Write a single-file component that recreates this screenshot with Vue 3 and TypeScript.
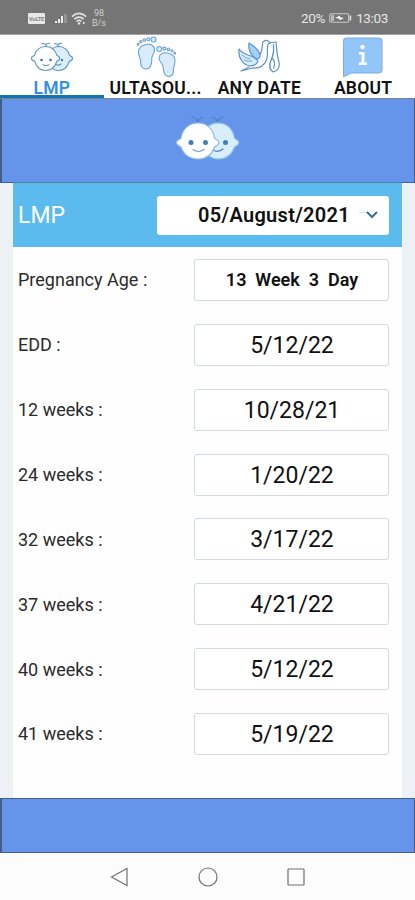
<script setup lang="ts">
import { ref } from 'vue'

interface Result {
  label: string
  value: string
  strong?: boolean
}

const tabs = ['LMP', 'ULTASOU...', 'ANY DATE', 'ABOUT']
const active = ref(0)

const results: Result[] = [
  { label: 'Pregnancy Age :', value: '13  Week  3  Day', strong: true },
  { label: 'EDD :', value: '5/12/22' },
  { label: '12 weeks :', value: '10/28/21' },
  { label: '24 weeks :', value: '1/20/22' },
  { label: '32 weeks :', value: '3/17/22' },
  { label: '37 weeks :', value: '4/21/22' },
  { label: '40 weeks :', value: '5/12/22' },
  { label: '41 weeks :', value: '5/19/22' },
]
</script>

<template>
  <div class="screen">
    <div class="status">
      <div class="status-left">
        <span class="volte">VoLTE</span>
        <svg class="signal" width="14" height="12" viewBox="0 0 14 12">
          <path d="M0 9h2v2H0zM3 7h2v4H3zM6 4h2v7H6z" fill="#ececec" />
          <path d="M9 2h3v9H9z" fill="#939393" />
        </svg>
        <svg class="wifi" width="16" height="13" viewBox="0 0 16 13">
          <path d="M1 4.600Q8-1.800 15 4.600M3.300 7.200Q8 3 12.700 7.200M5.600 9.500Q8 7.400 10.400 9.500" fill="none" stroke="#e2e2e2" stroke-width="1.600" />
          <circle cx="8" cy="11.400" r="1.200" fill="#e6e6e6" />
          <path d="M12 10h1.500v2H12z" fill="#e6e6e6" />
        </svg>
        <span class="speed"><span>98</span><span>B/s</span></span>
      </div>
      <div class="status-right">
        <span>20%</span>
        <svg width="23" height="10" viewBox="0 0 23 10">
          <rect x=".7" y=".7" width="19" height="8.600" rx="1.500" fill="none" stroke="#c9c9c9" stroke-width="1.100" />
          <path d="M2 2h3v6H2z" fill="#bbb" />
          <path d="M6 5l5-2.500v1.700L15 5l-4.500 2.200V5.800z" fill="#fff" />
          <path d="M21.400 2.500v5" stroke="#ddd" stroke-width="1.600" />
        </svg>
        <span>13:03</span>
      </div>
    </div>

    <nav class="tabs">
      <button v-for="(tab, i) in tabs" :key="tab" class="tab" :class="{ active: i === active }" @click="active = i">
        <svg v-if="i === 0" class="tab-icon" width="44" height="42" viewBox="0 0 44 42">
          <g stroke="#5f93c6" stroke-width="1.100" stroke-linecap="round" fill="#dceffc">
            <path d="M28.500 11.500C34.500 11.500 38.500 15.500 39.500 20.500c4 1 4 5 0 5.500C37.500 32 34 35.500 28.500 35.500s-10-5-10-12 4-12 10-12z" />
            <path d="M28 11.500c-.5-2 1-3.500 4-3.300M28 11c0-1.800-1.500-2.500-3.500-2.300" fill="none" />
            <circle cx="32" cy="25" r="1.200" fill="#2879bb" stroke="none" />
            <path d="M26 29.500q3 1.500 5-.5" fill="none" />
            <path d="M15.500 11.500C21.500 11.500 25.500 15.500 27 20.500c3.500 1 3.500 5 0 5.500C25 32 21.500 35.500 15.500 35.500S6.500 32 4.500 26c-4-.5-4-4.500 0-5.500 1-5 5-9 11-9z" fill="#fff" />
            <path d="M16 11.500c-.5-2 1-3.500 3.500-3.300M16 11c0-1.800-1.500-2.500-4-2.300" fill="none" />
            <circle cx="11.500" cy="25" r="1.300" fill="#2879bb" stroke="none" />
            <circle cx="20.500" cy="25" r="1.300" fill="#2879bb" stroke="none" />
            <path d="M13 29.800q3 1.500 6 0" fill="none" />
          </g>
        </svg>
        <svg v-else-if="i === 1" class="tab-icon feet" width="44" height="42" viewBox="0 0 44 42">
          <g fill="#d9ecfd" stroke="#6ba2d5" stroke-width="1.100">
            <path d="M9 11c5-3 12-2.500 12.500 3.500.3 3.500-2.700 5.500-2.700 9C19 29 17.500 34 13.300 34S7.500 30 7.500 26c0-3-2-5-2-8.500S7 12.200 9 11z" />
            <path d="M38.500 19.500c-5-3-12-2-12.500 3.500-.3 3.500 3.500 5 4 8.500.5 6 1.500 10 5.500 10S40.500 38 40.500 35c0-4 1.500-5.500 1.500-9s-1.500-5.500-3.500-6.500z" />
            <circle cx="20.500" cy="4.500" r="2.500" />
            <circle cx="15.300" cy="4.300" r="1.500" />
            <circle cx="11.300" cy="5" r="1.300" />
            <circle cx="7.800" cy="6.700" r="1.100" />
            <circle cx="5.200" cy="9.300" r=".9" />
            <circle cx="26.300" cy="14" r="2.500" />
            <circle cx="31.400" cy="13.600" r="1.500" />
            <circle cx="35.500" cy="14.300" r="1.300" />
            <circle cx="39" cy="15.800" r="1.100" />
            <circle cx="41.700" cy="18.200" r=".9" />
          </g>
        </svg>
        <svg v-else-if="i === 2" class="tab-icon" width="44" height="42" viewBox="0 0 44 42">
          <g stroke="#5c93cf" stroke-width="1.200" stroke-linejoin="round" stroke-linecap="round">
            <path d="M31 8l8-1c1 7 .5 13 3 20 1.500 5-1.500 9-5.500 10-4-2-5-7-1.500-14 1.500-4 2-9 1.500-13.500" fill="#fff" />
            <path d="M35 23c3 3 3 7 1.500 10" fill="none" />
            <path d="M25.500 9c0-3.500 4-4.500 6-2.500l2 1.500-2.500 1c-1.500 6 .5 11-1.500 16-2.500 6-8 8.500-14 8L4 36c4-1.500 7-3 9-5z" fill="#fff" stroke="none" />
            <path d="M21 22c4-3 4-8 4.500-13 0-3.500 4-4.500 6-2.500l2 1.500-2.500 1c-1.500 6 .5 11-1.500 16-2.500 6-8 8.500-14 8L4 36l8-4" fill="none" />
            <path d="M2 14c-1 9 4 16 11 17 4 0 7-2 8-5-3-4-7-5-10-6-4-1.500-7-3-9-6z" fill="#d7ebfe" />
            <path d="M12 8c-1 7 2 12 6 15 2 1.500 5 1 5-2 0-6-6-10-11-13z" fill="#a6d0fa" />
            <path d="M5 20q4 4 8 4M7 25q4 2 8 1" fill="none" stroke-width=".8" />
          </g>
        </svg>
        <svg v-else class="tab-icon" width="44" height="42" viewBox="0 0 44 42">
          <path d="M5 3h33q3 0 3 3v29q0 3-3 3H10l-7.500 4V6Q2.500 3 5 3z" fill="#92c6f9" stroke="#79acdf" stroke-width="1" />
          <circle cx="21.500" cy="12" r="2.200" fill="#fff" />
          <path d="M18 17h5.500v10.500H26V30h-8v-2.500h2.500v-8H18z" fill="#fff" />
        </svg>
        <span class="tab-label">{{ tab }}</span>
      </button>
    </nav>

    <header class="banner">
      <svg width="66" height="48" viewBox="0 0 66 48">
        <g stroke-linecap="round" fill="none" stroke="#4f80c5" stroke-width="1.200">
          <path d="M43 8c-1-3-3-4-6-5M43 8c0-2 2-4 5-5M23 8c-1-3-3-4-6-5M23 8c0-2 2-4 5-5" />
          <path d="M43 9C52 9 58 15 59.500 24c1 2 4.500 2 4.500 4.500S61 32 59.500 33C57 40.500 51 45 43 45S27 38 27 27 34 9 43 9z" fill="#d8eefc" stroke="#8abdea" />
          <circle cx="50.500" cy="28.500" r="2.500" fill="#427fb8" stroke="none" />
          <path d="M38 36q5 3 10-1" />
          <path d="M23 9C32 9 38 15 39.500 24c1 2 4.500 2 4.500 4.500S41 32 39.500 33C37 40.500 31 45 23 45S8.500 40.500 6 33C4.500 32 1.500 31 1.500 28.500S5 26 6 24C7.500 15 14 9 23 9z" fill="#fff" stroke="#91bbe6" />
          <circle cx="16" cy="28.500" r="2.500" fill="#427fb8" stroke="none" />
          <circle cx="30.500" cy="28.500" r="2.500" fill="#427fb8" stroke="none" />
          <path d="M18 35.500q5.500 4 11 0" stroke="#6e9bca" />
        </g>
      </svg>
    </header>

    <main class="card">
      <section class="picker">
        <span class="picker-label">LMP</span>
        <button class="date">
          <span class="date-text">05/August/2021</span>
          <svg width="20" height="12" viewBox="0 0 20 12">
            <path d="M0 3h8l2 1H0z" fill="#dce5ea" />
            <path d="M8 3l5 5 5-5" fill="none" stroke="#38708d" stroke-width="2" />
          </svg>
        </button>
      </section>
      <section class="results">
        <div v-for="row in results" :key="row.label" class="row">
          <span class="label">{{ row.label }}</span>
          <span class="value" :class="{ strong: row.strong }">{{ row.value }}</span>
        </div>
      </section>
    </main>

    <div class="footer"></div>
    <div class="system">
      <svg width="20" height="20" viewBox="0 0 20 20"><path d="M1.500 10L17 1.500v17z" /></svg>
      <svg width="20" height="20" viewBox="0 0 20 20"><circle cx="10" cy="10" r="9" /></svg>
      <svg width="20" height="20" viewBox="0 0 20 20"><rect x="2" y="2" width="16" height="16" rx=".5" /></svg>
    </div>
  </div>
</template>

<style>
body {
  margin: 0;
  overflow: hidden;
}
</style>

<style scoped>
.screen {
  width: 415px;
  height: 900px;
  display: flex;
  flex-direction: column;
  overflow: hidden;
  background: #ebf1f5;
  font-family: Roboto, 'Liberation Sans', sans-serif;
  color: #111;
}
.screen * {
  box-sizing: border-box;
}
button {
  font-family: inherit;
  border: 0;
  padding: 0;
}
.status {
  flex: 0 0 35px;
  display: flex;
  justify-content: space-between;
  padding: 0 27px 0 28px;
  background: #757575;
  border-bottom: 1px solid #a5a5a5;
  color: #e6e6e6;
}
.status-left,
.status-right {
  display: flex;
  align-items: center;
  padding-top: 2px;
}
.volte {
  width: 17px;
  height: 11px;
  border-radius: 1px;
  background: #e8e8e8;
  color: #858585;
  font-size: 6px;
  line-height: 11px;
  font-weight: 700;
  text-align: center;
  letter-spacing: -0.3px;
}
.signal {
  margin-left: 10px;
}
.wifi {
  margin-left: 2px;
}
.speed {
  display: flex;
  flex-direction: column;
  margin-left: 5px;
  align-items: center;
  font-size: 9px;
  line-height: 10px;
  color: #d0d0d0;
}
.status-right {
  font-size: 13.5px;
  letter-spacing: -0.35px;
  gap: 4px;
  padding-top: 1px;
}
.tabs {
  flex: 0 0 63px;
  display: grid;
  grid-template-columns: repeat(4, 1fr);
  background: #fff;
  border-bottom: 1px solid #78828f;
}
.tab {
  display: flex;
  flex-direction: column;
  align-items: center;
  height: 63px;
  background: none;
  border-bottom: 3px solid transparent;
  color: #111;
}
.tab.active {
  color: #318fe5;
  border-bottom-color: #1673b1;
}
.tab-icon {
  flex: 0 0 42px;
}
.feet {
  margin-right: 2px;
}
.tab-label {
  margin-top: 1px;
  font-size: 17.5px;
  line-height: 20px;
  font-weight: 600;
  letter-spacing: 0.25px;
  white-space: nowrap;
}
.banner {
  flex: 0 0 84px;
  display: flex;
  align-items: flex-start;
  justify-content: center;
  padding-top: 15px;
  background: #6495ea;
  border: 1px solid #425e86;
  border-left-width: 2px;
  border-top: 0;
}
.card {
  flex: 0 0 616px;
  margin: -1px 13px 0;
  background: #fefefe;
}
.picker {
  height: 65px;
  display: flex;
  justify-content: space-between;
  align-items: center;
  padding: 0 13px 0 5px;
  background: #5bbaee;
  border-top: 1px solid #4f7fa8;
}
.picker-label {
  font-size: 23px;
  color: #fff;
}
.date {
  width: 232px;
  height: 39px;
  display: flex;
  align-items: center;
  justify-content: flex-end;
  gap: 9px;
  padding-right: 10px;
  border-radius: 3px;
  background: #fff;
  color: #111;
}
.date-text {
  font-size: 20px;
  font-weight: 600;
  letter-spacing: 0.3px;
}
.results {
  display: flex;
  flex-direction: column;
  gap: 22.85px;
  padding: 12px 13px 0 5px;
}
.row {
  display: grid;
  grid-template-columns: 1fr 195px;
  height: 42px;
  align-items: center;
}
.label {
  font-size: 18px;
  line-height: 20px;
  padding-top: 1px;
  color: #2b2b2b;
}
.row:first-child .label {
  padding: 0 0 1px;
}
.value {
  height: 42px;
  padding-left: 1px;
  border: 1px solid #d2dadf;
  border-radius: 3px;
  background: #fff;
  font-size: 23px;
  line-height: 41px;
  text-align: center;
  white-space: pre;
}
.value.strong {
  font-size: 18px;
  line-height: 40px;
  font-weight: 600;
}
.footer {
  flex: 0 0 55px;
  background: #6495ea;
  border: 1px solid #425e86;
  border-left-width: 2px;
}
.system {
  flex: 1;
  display: flex;
  justify-content: center;
  gap: 68px;
  padding-top: 14px;
  background: #fcfcfc;
}
.system svg {
  fill: none;
  stroke: #707070;
  stroke-width: 1.2;
}
</style>
